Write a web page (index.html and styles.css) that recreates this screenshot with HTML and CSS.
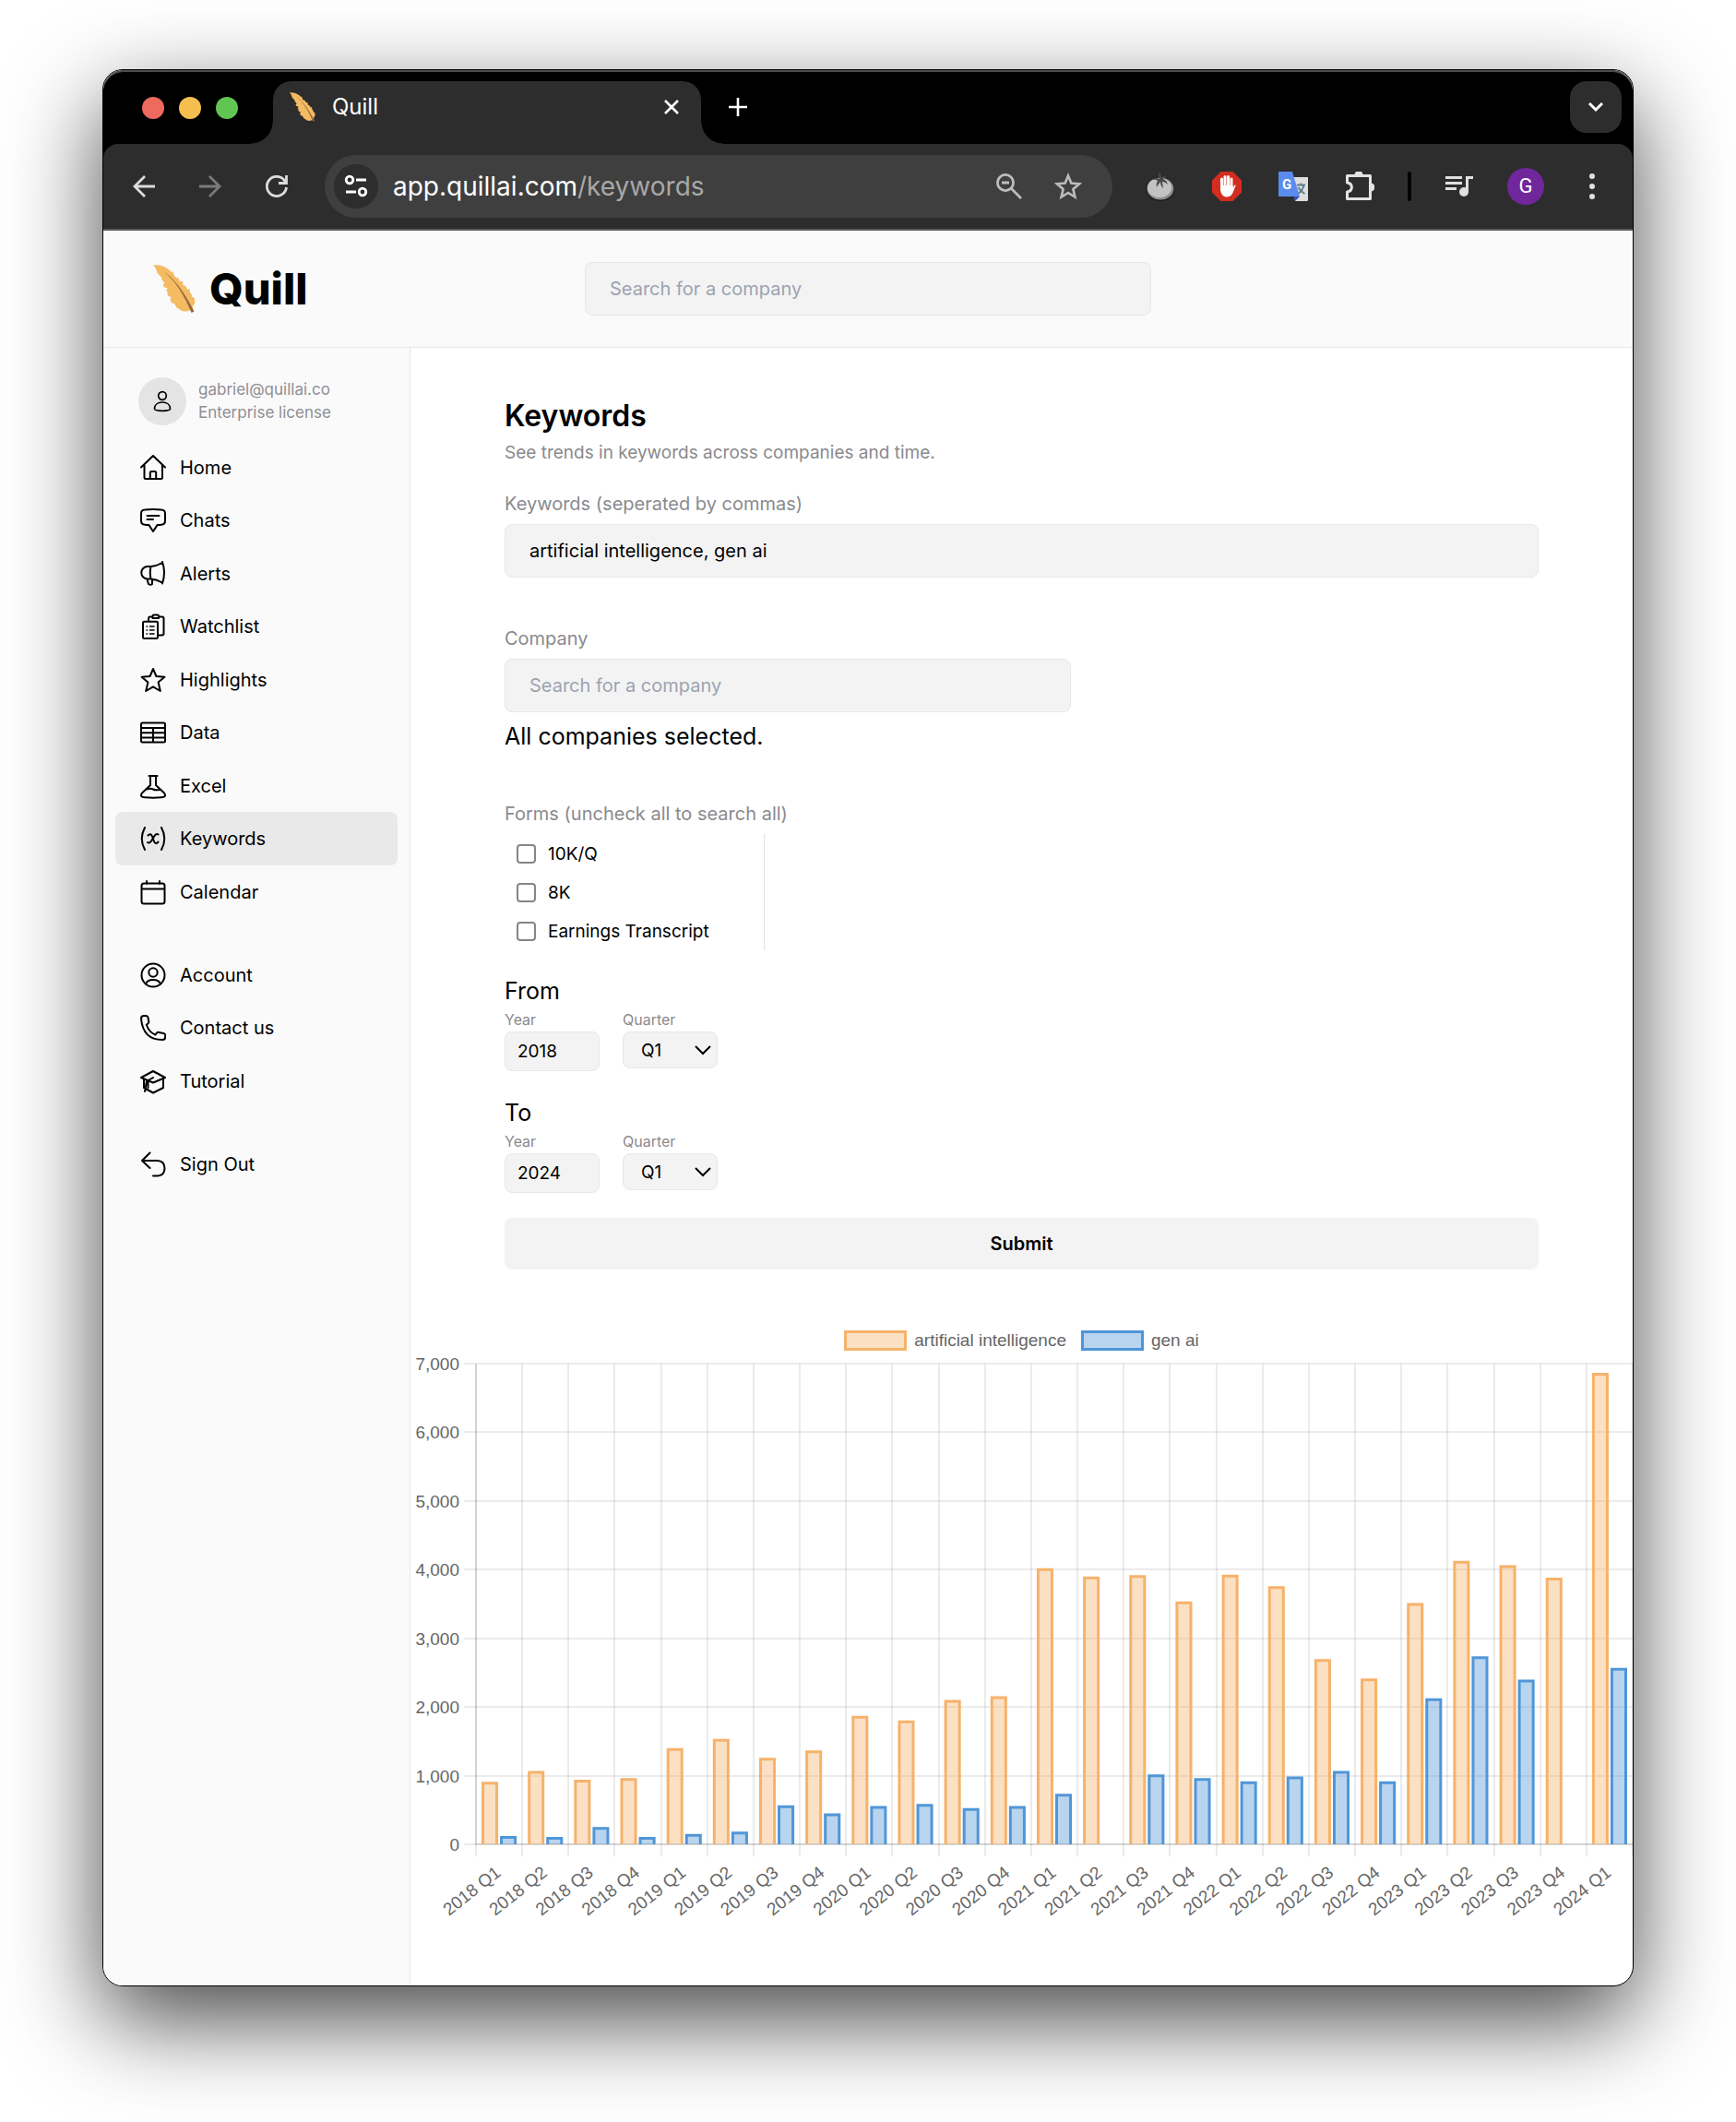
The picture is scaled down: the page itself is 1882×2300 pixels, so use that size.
FILE: index.html
```html
<!DOCTYPE html>
<html lang="en">
<head>
<meta charset="utf-8">
<meta name="viewport" content="width=device-width, initial-scale=1">
<title>Quill</title>
<link rel="stylesheet" href="styles.css">
</head>
<body>
<svg class="defs" aria-hidden="true">
  <symbol id="feather" viewBox="0 0 46 52">
    <path fill="#f5bb62" d="M0 .5C8-.8 16 3 20.500 8.500L21.500 7l1.500 5 3 2.500 1-1 1.500 4 4 1-.5 3 3.500 2 2 3.500 2-1 .5 4.500 2.500 2-1 1.500 3.500 2.500 0 6-2.500 2.500 1 1-4 3.500c-3 2-9 1.200-12-2l-2-1-2.500-4.500-3.500-1-1-4.500 1.200-1-4-2.500-.5-4.500-1.500-1 2.500-1.500-4.500-2-1-2.500 2-1.500-4-4.500 1-1L4.500 9C3.500 5 2.500 2.500 0 .5z"/>
    <path fill="#96683f" d="M11 7c11 7 22 21 33.500 43.500l-3 1.500C33 31 23 16 11 7z"/>
  </symbol>
</svg>
<div class="window">
  <div class="tabstrip">
    <div class="lights"><span class="light red"></span><span class="light yellow"></span><span class="light green"></span></div>
    <div class="tab">
      <svg class="favicon"><use href="#feather"/></svg>
      <span class="tab-title">Quill</span>
      <button class="bare" aria-label="Close tab"><svg width="18" height="18" viewBox="0 0 18 18" fill="none" stroke="#fff" stroke-width="2.600"><path d="M2 2l14 14M16 2L2 16"/></svg></button>
    </div>
    <button class="bare new-tab" aria-label="New tab"><svg width="20" height="20" viewBox="0 0 20 20" fill="none" stroke="#fff" stroke-width="2.600"><path d="M10 0v20M0 10h20"/></svg></button>
    <button class="bare tab-search" aria-label="Search tabs"><svg width="18" height="12" viewBox="0 0 18 12" fill="none" stroke="#fff" stroke-width="3"><path d="M2 2l7 7 7-7"/></svg></button>
  </div>

  <div class="toolbar">
    <div class="history">
      <button class="bare" aria-label="Back"><svg width="24" height="24" viewBox="0 0 24 24" fill="none" stroke="#dcdcdc" stroke-width="2.800"><path d="M24 12H2M13 1L2 12l11 11"/></svg></button>
      <button class="bare" aria-label="Forward"><svg width="24" height="24" viewBox="0 0 24 24" fill="none" stroke="#7b7b7b" stroke-width="2.800"><path d="M0 12h22M11 1l11 11-11 11"/></svg></button>
      <button class="bare" aria-label="Reload"><svg width="24" height="24" viewBox="0 0 24 24" fill="none" stroke="#dcdcdc" stroke-width="2.800"><path d="M22.500 13A10.600 10.600 0 1 1 20 5l2 3"/><path d="M22.500 0v8.500H14"/></svg></button>
    </div>
    <div class="address">
      <span class="site-info"><svg width="26" height="26" viewBox="0 0 26 26" fill="none" stroke="#fff" stroke-width="2.800"><circle cx="6" cy="6" r="3.800"/><path d="M13 6h11M2 19h11"/><circle cx="20" cy="19" r="3.800"/></svg></span>
      <span class="url">app.quillai.com<span class="path">/keywords</span></span>
      <svg width="28" height="28" viewBox="0 0 28 28" fill="none" stroke="#bdbdbd" stroke-width="2.800"><circle cx="10" cy="10" r="8.600"/><path d="M6 10h8M16 16l11 11"/></svg>
      <svg class="bookmark" width="30" height="30" viewBox="0 0 30 30" fill="none" stroke="#bdbdbd" stroke-width="2.600"><path d="M15 3.500l3.300 8 8.700.8-6.600 5.700 2 8.500-7.400-4.500-7.400 4.500 2-8.500L3 12.300l8.700-.8z"/></svg>
    </div>
    <div class="extensions">
      <svg width="32" height="32" viewBox="0 0 32 32"><ellipse cx="16" cy="19" rx="15.500" ry="13" fill="#1c1c1c"/><ellipse cx="16" cy="18.500" rx="14.500" ry="12" fill="#8f8f8f"/><ellipse cx="15" cy="17.500" rx="13" ry="10.500" fill="#c3c3c3"/><path d="M15 8c-3-2-6-1-8 1 3-.5 5 0 6 1-1 2-2 4-1 7 1-3 3-4 4-6 0 3 1 5 3 7 0-3-1-5-1-7 2 0 4 1 6 3-1-4-3-5-5-6 1-1 3-2 4-2-2-1-4-1-6 1l-1-6-2 1z" fill="#4a4a4a"/></svg>
      <svg width="32" height="32" viewBox="0 0 32 32"><path d="M9.500 0h13L32 9.500v13L22.500 32h-13L0 22.500v-13z" fill="#d32d20"/><path fill="none" stroke="#fff" stroke-width="3" stroke-linecap="round" d="M10.500 8v10M14 5.500V17M17.600 5.500V17M21 8v10"/><path fill="#fff" d="M9 15h13.500v3l1.500-3c1-1 2-.5 1.500.5L22 24c-1.500 2.500-3.500 3.500-6.500 3.500S9 24 9 19z"/></svg>
      <svg width="32" height="32" viewBox="0 0 32 32"><path d="M15 6h17v24.500q0 1.500-1.500 1.500H18z" fill="#dedede"/><path d="M16.500 27h6.500l-5 5z" fill="#3a50b8"/><path d="M1 0h14l8 27H1q-1 0-1-1V1q0-1 1-1z" fill="#5b8bee"/><path d="M20 14.500h9M24.500 12.500v2M27.500 14.500c-1 5-4 8-6 9M21.500 17c2 4 4 5.500 7 7" fill="none" stroke="#5f7d8a" stroke-width="1.800"/><text x="9" y="18.500" text-anchor="middle" class="g-letter">G</text></svg>
      <svg width="32" height="32" viewBox="0 0 32 32" fill="none" stroke="#e3e3e3" stroke-width="3"><path d="M2.500 4.500h25v25h-25v-7.500c6.500-1 6.500-9 0-10z" stroke-linejoin="round"/><path fill="#e3e3e3" stroke="none" d="M10.500 3.500a4.500 4.500 0 0 1 9 0zM28 12.500a4.500 4.500 0 0 1 0 9z"/></svg>
    </div>
    <span class="divider"></span>
    <div class="profile">
      <svg width="32" height="24" viewBox="0 0 32 24"><path d="M1 2.500h18M1 8.500h18M1 14.500h12" stroke="#e0e0e0" stroke-width="3" fill="none"/><circle cx="21" cy="18" r="5" fill="#e0e0e0"/><path d="M23 18V1h8v3h-5v14z" fill="#e0e0e0"/></svg>
      <span class="badge">G</span>
    </div>
    <button class="bare menu" aria-label="Menu"><svg width="8" height="28" viewBox="0 0 8 28" fill="#e0e0e0"><circle cx="4" cy="3" r="3"/><circle cx="4" cy="14" r="3"/><circle cx="4" cy="25" r="3"/></svg></button>
  </div>

  <header class="header">
    <a class="logo" href="#"><svg class="logo-mark"><use href="#feather"/></svg><span>Quill</span></a>
    <input class="field" type="search" placeholder="Search for a company" aria-label="Search for a company">
  </header>

  <div class="layout">
    <aside class="sidebar">
      <div class="user">
        <span class="avatar"><svg width="20" height="24" viewBox="0 0 20 24" fill="none" stroke="#000" stroke-width="1.700"><circle cx="10" cy="6" r="4.300"/><path d="M1.500 20c0-4.500 3.800-7 8.500-7s8.500 2.500 8.500 7c0 1.500-4 2.300-8.500 2.300S1.500 21.500 1.500 20z"/></svg></span>
        <div class="user-text"><span>gabriel@quillai.co</span><span>Enterprise license</span></div>
      </div>
      <nav>
        <ul class="nav">
          <li><a href="#"><svg class="icon" viewBox="0 0 28 28"><path d="M1 13.500L14 1l13 12.500M4.500 11v13.500q0 1.500 1.500 1.500h16.500q1.500 0 1.500-1.500V11M10.800 26v-6.500q0-1.500 1.500-1.500h3.400q1.500 0 1.500 1.500V26"/></svg>Home</a></li>
          <li><a href="#"><svg class="icon" viewBox="0 0 28 28"><path d="M5 2.500q9-1 18 0 4 .3 4 4v8q0 4-4 4.300-2.500.3-4.500.3L14 26l-4.500-6.900q-2 0-4.500-.3-4-.3-4-4.300v-8q0-3.700 4-4zM7.500 9h13M7.500 13H14"/></svg>Chats</a></li>
          <li><a href="#"><svg class="icon" viewBox="0 0 28 28"><path d="M11.500 6Q18 5.500 24 2M24 23.500Q18 20 11.500 19.500M11.500 6H8a6.700 6.700 0 0 0 0 13.500h3.500M11.500 6q-1.500 6.500 0 13.500M24 1q4 11.500 0 23.500M7.500 20l1.500 5q2 1.500 4 0v-5"/></svg>Alerts</a></li>
          <li><a href="#"><svg class="icon" viewBox="0 0 28 28"><path d="M9 8V5.500q0-2 2-2h2.500M20 3.500h3.500q2 0 2 2v16q0 2-2 2H20M13.500 5V2.800q0-1.300 1.300-1.300h3.900Q20 1.500 20 2.800V5zM4.300 8.800h13.400q1.300 0 1.300 1.300v15.600q0 1.300-1.300 1.300H4.300Q3 27 3 25.700V10.100q0-1.300 1.300-1.300z"/><path stroke-width="1.600" d="M7 14h.5M10.500 14H15M7 18h.5M10.500 18H15M7 22h.5M10.500 22H15"/></svg>Watchlist</a></li>
          <li><a href="#"><svg class="icon" viewBox="0 0 28 28"><path d="M14 2l3.400 8 9 .8-6.800 5.800 2.200 9.400-7.800-4.600L6.200 26l2.200-9.400-6.800-5.800 9-.8z"/></svg>Highlights</a></li>
          <li><a href="#"><svg class="icon" viewBox="0 0 28 28"><path d="M2.500 3.500h23q1.500 0 1.500 1.500v18q0 1.500-1.500 1.500h-23Q1 24.500 1 23V5q0-1.500 1.500-1.500zM1 9h26M1 14.200h26M1 19.400h26M14 9v15.500"/></svg>Data</a></li>
          <li><a href="#"><svg class="icon" viewBox="0 0 28 28"><path d="M9.500 3h9M11 3v10L2 21.500q-3 4.500 3 4.800 9 .7 18 0 6-.3 3-4.800L17 13V3M7 17.500q4-1.500 7 0t7.500.3"/></svg>Excel</a></li>
          <li><a class="active" href="#"><svg class="icon" viewBox="0 0 28 28"><path d="M5 2q-6.500 12 0 24M23 2q6.500 12 0 24M8.500 10.500q3-3 4.500 1l2 5.500q1.500 4 4.500.5M19.500 9.500q-2-1.500-4 1.500l-3.500 5.500q-2 3-4 1.500"/></svg>Keywords</a></li>
          <li><a href="#"><svg class="icon" viewBox="0 0 28 28"><path d="M4 4.500h20q2.500 0 2.500 2.500v17q0 2.500-2.500 2.500H4Q1.500 26.500 1.500 24V7q0-2.500 2.500-2.500zM1.500 10.500h25M7 2v3M21 2v3"/></svg>Calendar</a></li>
        </ul>
        <ul class="nav">
          <li><a href="#"><svg class="icon" viewBox="0 0 28 28"><circle cx="14" cy="14" r="12.500"/><circle cx="14" cy="11" r="4.700"/><path d="M6 23.500q1.500-4.500 8-4.500t8 4.500"/></svg>Account</a></li>
          <li><a href="#"><svg class="icon" viewBox="0 0 28 28"><path d="M1 4q0-3 3-3h2q2 0 2.500 2l.8 4.500q0 1.200-1 2l-1.500 1.200q2.500 7.500 9.500 11l1.600-2q1-1.200 2.500-.8l4.800 1q2 .5 2 2.500v1.500q0 3.100-3.200 3.100Q3 27 1 4z"/></svg>Contact us</a></li>
          <li><a href="#"><svg class="icon" viewBox="0 0 28 28"><path d="M14 3l13 7-13 5.500L1 10zM4 12v9l10 5.500L25 21v-9.500M14 10l-7 4-2 11M8.500 14v7"/></svg>Tutorial</a></li>
        </ul>
        <ul class="nav">
          <li><a href="#"><svg class="icon" viewBox="0 0 28 28"><path d="M10.500 1.500L2 10l8.500 8M2 10h16.500q8 .5 8 8.300 0 7.700-8 8.200H14"/></svg>Sign Out</a></li>
        </ul>
      </nav>
    </aside>

    <main class="main">
      <form class="form">
        <h1>Keywords</h1>
        <p class="subtitle">See trends in keywords across companies and time.</p>

        <div class="group">
          <label class="label" for="keywords">Keywords (seperated by commas)</label>
          <input class="field" id="keywords" type="text" value="artificial intelligence, gen ai">
        </div>

        <div class="group">
          <label class="label" for="company">Company</label>
          <input class="field narrow" id="company" type="text" placeholder="Search for a company">
          <p class="lead">All companies selected.</p>
        </div>

        <fieldset class="group forms">
          <legend class="label">Forms (uncheck all to search all)</legend>
          <div class="checks">
            <label><input type="checkbox">10K/Q</label>
            <label><input type="checkbox">8K</label>
            <label><input type="checkbox">Earnings Transcript</label>
          </div>
        </fieldset>

        <section class="period">
          <h2 class="lead">From</h2>
          <div class="period-row">
            <div class="cell"><label for="from-year">Year</label><input id="from-year" class="small" type="text" value="2018"></div>
            <div class="cell"><label for="from-quarter">Quarter</label>
              <div class="select"><select id="from-quarter" class="small"><option>Q1</option><option>Q2</option><option>Q3</option><option>Q4</option></select><svg width="18" height="11" viewBox="0 0 18 11" fill="none" stroke="#000" stroke-width="2"><path d="M1 1l8 8 8-8"/></svg></div>
            </div>
          </div>
        </section>

        <section class="period">
          <h2 class="lead">To</h2>
          <div class="period-row">
            <div class="cell"><label for="to-year">Year</label><input id="to-year" class="small" type="text" value="2024"></div>
            <div class="cell"><label for="to-quarter">Quarter</label>
              <div class="select"><select id="to-quarter" class="small"><option>Q1</option><option>Q2</option><option>Q3</option><option>Q4</option></select><svg width="18" height="11" viewBox="0 0 18 11" fill="none" stroke="#000" stroke-width="2"><path d="M1 1l8 8 8-8"/></svg></div>
            </div>
          </div>
        </section>

        <button class="submit" type="button">Submit</button>
      </form>

      <figure class="chart">
        <figcaption class="legend">
          <span class="key"><span class="swatch orange"></span>artificial intelligence</span>
          <span class="key"><span class="swatch blue"></span>gen ai</span>
        </figcaption>
        <svg id="plot" class="plot" viewBox="0 0 1325 625" role="img" aria-label="Keyword mentions by quarter"></svg>
      </figure>
    </main>
  </div>
</div>
<script src="chart.js"></script>
</body>
</html>
```
FILE: styles.css
```css
* { box-sizing: border-box; }

body {
  margin: 0;
  background: #fff;
  color: #000;
  font-family: Inter, "Liberation Sans", sans-serif;
  font-size: 20px;
}

h1, h2, p, ul, figure, fieldset { margin: 0; padding: 0; border: 0; }
ul { list-style: none; }
svg { display: block; flex: none; }
button, input, select { font: inherit; color: inherit; }
a { color: inherit; text-decoration: none; }

.defs { position: absolute; width: 0; height: 0; }

.bare {
  display: flex;
  align-items: center;
  justify-content: center;
  padding: 0;
  border: 0;
  background: none;
}

.window {
  display: flex;
  flex-direction: column;
  min-height: calc(100vh - 222px);
  margin: 75px 111px 147px;
  border: 1px solid #000;
  border-radius: 22px;
  background: #fff;
  overflow: hidden;
  box-shadow: 0 36px 100px rgba(0, 0, 0, .72);
}

/* Browser chrome */
.tabstrip {
  position: relative;
  z-index: 1;
  display: flex;
  align-items: flex-start;
  height: 80px;
  padding: 12px 12px 0 42px;
  background: #000;
  box-shadow: inset 0 2px #4d4d4d;
  border-radius: 22px 22px 0 0;
}

.lights { display: flex; gap: 16px; padding-top: 17px; }
.light { width: 24px; height: 24px; border-radius: 50%; }
.red { background: #ed6a5f; }
.yellow { background: #f5bf4f; }
.green { background: #61c554; }

.tab {
  position: relative;
  display: flex;
  align-items: center;
  width: 464px;
  height: 68px;
  margin-left: 38px;
  padding: 0 23px 12px 18px;
  border-radius: 20px 20px 0 0;
  background: #2d2d2d;
}

.tab::before,
.tab::after {
  content: "";
  position: absolute;
  bottom: 0;
  width: 24px;
  height: 24px;
}

.tab::before { right: 100%; background: radial-gradient(circle at 0 0, transparent 23px, #2d2d2d 24px); }
.tab::after { left: 100%; background: radial-gradient(circle at 100% 0, transparent 23px, #2d2d2d 24px); }

.favicon { width: 28px; height: 32px; }
.tab-title { flex: 1; margin-left: 18px; color: #fff; font-size: 24px; line-height: 32px; }
.new-tab { width: 20px; height: 56px; margin-left: 30px; }
.tab-search { width: 56px; height: 56px; margin-left: auto; border-radius: 18px; background: #2d2d2d; }

.toolbar {
  display: flex;
  align-items: center;
  height: 94px;
  padding: 0 40px 0 32px;
  border-bottom: 2px solid #5a5a5a;
  border-radius: 16px 16px 0 0;
  background: #2d2d2d;
  box-shadow: 0 -20px #000;
}

.history { display: flex; gap: 48px; margin-right: 40px; }

.address {
  display: flex;
  flex: 1;
  align-items: center;
  height: 68px;
  padding: 0 33px 0 10px;
  border-radius: 34px;
  background: #3f3f3f;
}

.site-info {
  display: flex;
  align-items: center;
  justify-content: center;
  width: 48px;
  height: 48px;
  border-radius: 50%;
  background: #2d2d2d;
}

.url { flex: 1; margin-left: 16px; color: #fff; font-size: 28px; line-height: 36px; }
.path { color: #a8a8a8; }
.bookmark { margin-left: 35px; }

.extensions { display: flex; gap: 40px; margin: 0 36px; }
.g-letter { font: bold 15px Roboto, sans-serif; fill: #fff; }
.divider { width: 4px; height: 32px; border-radius: 2px; background: #000; }
.profile { display: flex; align-items: center; gap: 36px; margin: 0 48px 0 36px; }

.badge {
  width: 40px;
  border-radius: 50%;
  background: #71279c;
  color: #fff;
  font: 22px/40px Roboto, sans-serif;
  text-align: center;
}

/* Page header */
.header {
  display: grid;
  grid-template-columns: 1fr 614px 1fr;
  align-items: center;
  height: 127px;
  border-bottom: 1px solid #e8e8e8;
  background: #fafafa;
}

.logo {
  display: flex;
  align-items: center;
  gap: 15px;
  padding-left: 54px;
  font-size: 47px;
  font-weight: 800;
  line-height: 56px;
}

.logo-mark { width: 46px; height: 52px; }

.field {
  width: 100%;
  height: 58px;
  padding: 0 26px;
  border: 1px solid #e8e8e8;
  border-radius: 8px;
  background: #f3f3f3;
  font-size: 20px;
}

.field::placeholder { color: #9ca3af; opacity: 1; }

/* Sidebar */
.layout { display: flex; flex: 1; }

.sidebar {
  flex: none;
  width: 333px;
  padding: 32px 13px;
  border-right: 1px solid #e8e8e8;
  background: #fafafa;
}

.user { display: flex; align-items: center; gap: 13px; padding-left: 25px; margin-bottom: 17px; }

.avatar {
  display: flex;
  align-items: center;
  justify-content: center;
  width: 52px;
  height: 52px;
  border-radius: 50%;
  background: #e4e4e4;
}

.user-text { display: grid; color: #8e8e93; font-size: 17px; line-height: 25px; }

.nav { display: grid; margin-bottom: 33px; }
.nav li:nth-child(odd) { margin-bottom: -1px; }

.nav a {
  display: flex;
  align-items: center;
  gap: 15px;
  height: 58px;
  padding-left: 27px;
  border-radius: 8px;
}

.nav .active { background: #e9e9e9; }

.icon {
  width: 28px;
  height: 28px;
  fill: none;
  stroke: #000;
  stroke-width: 2;
  stroke-linecap: round;
  stroke-linejoin: round;
}

/* Query form */
.main { flex: 1; min-width: 0; }
.form { padding: 54px 102px 0; }
h1 { font-size: 32px; font-weight: 600; line-height: 40px; }
.subtitle { margin: 6px 0 26px; color: #8a8a8e; font-size: 19px; line-height: 28px; }
.group { margin-bottom: 51px; }
.label { display: block; margin-bottom: 7px; padding: 0; color: #8a8a8e; font-size: 20px; line-height: 30px; }
.narrow { width: 614px; max-width: 100%; }
.lead { font-size: 25px; font-weight: 400; line-height: 36px; }
.field + .lead { margin: 8px 0 2px; }
.forms { margin-bottom: 26px; }

.checks { display: grid; width: 282px; border-right: 1px solid #e0e0e6; font-size: 19px; }
.checks label { display: flex; align-items: center; gap: 13px; height: 42px; padding-left: 13px; }

.checks input {
  appearance: none;
  width: 21px;
  height: 21px;
  margin: 0;
  border: 2px solid #868686;
  border-radius: 4px;
  background: #fff;
}

.period { margin-bottom: 27px; }
.period-row { display: flex; gap: 25px; margin-top: 1px; }
.cell { width: 103px; }
.cell label { display: block; margin-bottom: 1px; color: #8a8a8e; font-size: 16px; line-height: 24px; }

.small {
  width: 100%;
  height: 43px;
  padding: 0 13px;
  border: 1px solid #e8e8e8;
  border-radius: 8px;
  background: #f3f3f3;
  font-size: 19px;
}

.select { display: grid; align-items: center; }
.select select { grid-area: 1 / 1; height: 40px; padding: 0 19px; appearance: none; }
.select svg { grid-area: 1 / 1; justify-self: end; margin-right: 7px; pointer-events: none; }

.submit {
  display: block;
  width: 100%;
  height: 56px;
  border: 0;
  border-radius: 8px;
  background: #f3f3f3;
  font-weight: 600;
}

/* Chart */
.chart { padding-top: 66px; color: #666; font-family: "Liberation Sans", Arial, sans-serif; font-size: 19px; }
.legend { display: flex; justify-content: center; gap: 16px; line-height: 22px; }
.key { display: flex; gap: 8px; }
.swatch { width: 68px; height: 22px; border: 3px solid; }
.swatch.orange { border-color: #f6b26b; background: #fbe0c4; }
.swatch.blue { border-color: #4f94d6; background: #b9d4ef; }

.plot { width: 100%; fill: #666; }
.grid { fill: none; stroke: rgba(0, 0, 0, .08); stroke-width: 2; }
.axis { fill: none; stroke: rgba(0, 0, 0, .1); stroke-width: 2; }
.bar { stroke-width: 3; }
.bar.orange { fill: rgba(246, 178, 107, .4); stroke: #f6b26b; }
.bar.blue { fill: rgba(80, 148, 215, .4); stroke: #5096d7; }
```
FILE: chart.js
```js
const years = [2018, 2019, 2020, 2021, 2022, 2023];
const labels = years.flatMap(y => [1, 2, 3, 4].map(q => `${y} Q${q}`)).concat("2024 Q1");

const series = [
  { name: "orange", values: [911, 1067, 941, 965, 1402, 1534, 1258, 1366, 1870, 1804, 2104, 2157, 4021, 3901, 3919, 3536, 3925, 3757, 2697, 2415, 3512, 4129, 4063, 3883, 6867] },
  { name: "blue", values: [120, 108, 252, 108, 150, 186, 569, 449, 557, 587, 527, 557, 737, 0, 1019, 965, 917, 989, 1067, 917, 2127, 2739, 2397, 0, 2571] }
];

const plot = { left: 71, right: 1325, top: 14, bottom: 535, max: 7000 };
const step = (plot.right - plot.left) / labels.length;
const svg = document.getElementById("plot");

function add(tag, attrs, text) {
  const el = document.createElementNS("http://www.w3.org/2000/svg", tag);
  for (const key in attrs) el.setAttribute(key, attrs[key]);
  if (text) el.textContent = text;
  svg.appendChild(el);
}

const yOf = value => plot.bottom - value / plot.max * (plot.bottom - plot.top);

for (let value = 0; value <= plot.max; value += 1000) {
  const y = Math.round(yOf(value));
  add("path", { class: "grid", d: `M${plot.left - 13} ${y}H${plot.right}` });
  add("text", { x: plot.left - 18, y: y + 7, "text-anchor": "end" }, value.toLocaleString("en-US"));
}

for (let i = 0; i <= labels.length; i++) {
  const x = Math.round(plot.left + i * step);
  add("path", { class: "grid", d: `M${x} ${plot.top}V${plot.bottom + 13}` });
}

add("path", { class: "axis", d: `M${plot.left} ${plot.top}V${plot.bottom}H${plot.right}` });

labels.forEach((label, i) => {
  const x = plot.left + (i + 0.5) * step + 3;
  const y = plot.bottom + 33;
  add("text", { x, y, "text-anchor": "end", transform: `rotate(-38 ${x} ${y})` }, label);
});

series.forEach((s, n) => {
  s.values.forEach((value, i) => {
    if (!value) return;
    const x = plot.left + (i + 0.1) * step + n * 0.4 * step + 1;
    const width = step * 0.36;
    const y = yOf(value);
    const d = `M${x + 1.5} ${plot.bottom}V${y + 1.5}H${x + width - 1.5}V${plot.bottom}`;
    add("path", { class: `bar ${s.name}`, d });
  });
});
```
